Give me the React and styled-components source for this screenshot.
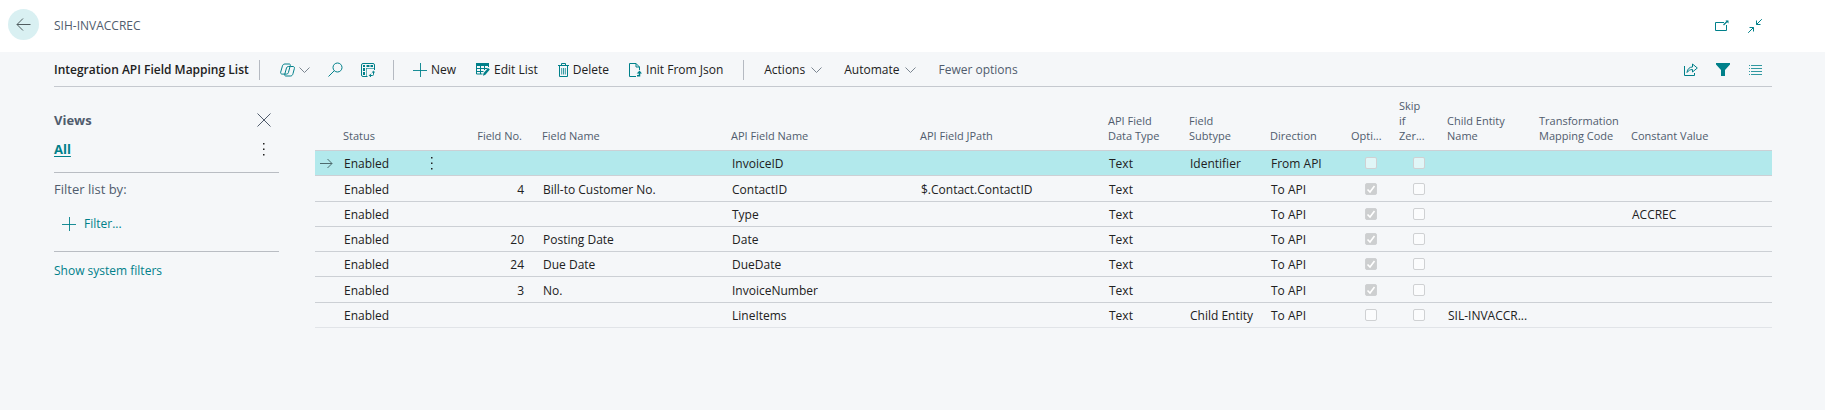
import React from "react";
import styled, { createGlobalStyle } from "styled-components";

const teal = "#00808a";
const slate = "#505c6d";
const rule = "#b9bdc3";

const GlobalStyle = createGlobalStyle`
  * { box-sizing: border-box; }
  body {
    margin: 0;
    background: #f5f7f9;
    color: #212121;
    font: 13px/20px "Open Sans", "Noto Sans", sans-serif;
  }
`;

const Header = styled.header`
  display: flex;
  align-items: center;
  justify-content: space-between;
  height: 52px;
  padding: 0 63px 0 8px;
  background: #fff;
`;

const Group = styled.div`
  display: flex;
  align-items: center;
  gap: ${(p) => p.$gap || 0}px;
`;

const IconButton = styled.button`
  display: inline-flex;
  align-items: center;
  justify-content: center;
  gap: 4px;
  min-width: 14px;
  padding: 0;
  border: 0;
  background: none;
  color: ${(p) => p.$color || teal};
`;

const BackButton = styled(IconButton)`
  width: 31px;
  height: 31px;
  margin-bottom: 4px;
  border-radius: 50%;
  background: #d9f0f2;
`;

const Crumb = styled.span`
  color: ${slate};
  font-size: 12px;
`;

const Main = styled.main`
  padding: 0 53px 0 54px;
`;

const Toolbar = styled.div`
  display: flex;
  align-items: center;
  justify-content: space-between;
  height: 35px;
  padding: 1px 10px 0 0;
  border-bottom: 1px solid #c5c9cf;
`;

const Title = styled.h1`
  margin: 0;
  width: 196px;
  font-size: 12px;
  font-weight: 600;
  white-space: nowrap;
`;

const Divider = styled.span`
  width: 1px;
  height: 20px;
  margin: 0 ${(p) => p.$right}px 0 ${(p) => p.$left}px;
  background: #b5bac2;
`;

const Action = styled.button`
  display: inline-flex;
  align-items: center;
  gap: ${(p) => p.$gap || 4}px;
  padding: 0;
  border: 0;
  background: none;
  color: ${(p) => (p.$muted ? slate : "#212121")};
  font: inherit;
  font-size: 12px;
  white-space: nowrap;
`;

const ActionIcon = styled.span`
  display: inline-flex;
  color: ${teal};
`;

const Body = styled.div`
  display: flex;
  gap: 36px;
`;

const Side = styled.aside`
  flex: 0 0 225px;
  padding-top: 22px;
`;

const SideRow = styled.div`
  display: flex;
  align-items: center;
  justify-content: space-between;
  height: 22px;
  padding-right: 8px;
  margin-bottom: ${(p) => p.$after || 0}px;
`;

const SideTitle = styled.h2`
  margin: 0;
  color: ${slate};
  font-size: 13px;
  font-weight: 700;
`;

const SideLink = styled.a`
  color: ${teal};
  font-size: ${(p) => (p.$active ? 13 : 12)}px;
  font-weight: ${(p) => (p.$active ? 700 : 400)};
  text-decoration: ${(p) => (p.$active ? "underline" : "none")};
  text-underline-offset: 2px;
`;

const Section = styled.section`
  padding-top: ${(p) => p.$top}px;
  border-top: 1px solid ${rule};
`;

const SectionLabel = styled.div`
  height: 20px;
  color: ${slate};
`;

const AddFilter = styled(Action)`
  height: 20px;
  margin: 15px 0 17px 8px;
  color: ${teal};
`;

const GridWrap = styled.div`
  flex: 1;
  min-width: 0;
`;

const Grid = styled.table`
  width: 100%;
  margin-top: 8px;
  border-collapse: separate;
  border-spacing: 0;
  table-layout: fixed;
`;

const HeadCell = styled.th`
  height: 56px;
  padding: 0 ${(p) => (p.$align === "right" ? 12 : 0)}px 7px 8px;
  border-bottom: 1px solid #ccd0d5;
  color: ${slate};
  font-size: 11px;
  font-weight: 400;
  line-height: 15px;
  text-align: ${(p) => p.$align || "left"};
  vertical-align: bottom;
  white-space: nowrap;
`;

const Cell = styled.td`
  padding: 2px ${(p) => (p.$align === "right" ? 10 : 0)}px 0 9px;
  overflow: hidden;
  border-bottom: 1px solid #ccd0d5;
  font-size: 12px;
  text-align: ${(p) => p.$align || "left"};
  text-overflow: ellipsis;
  white-space: nowrap;
`;

const Row = styled.tr`
  height: 25px;
  background: ${(p) => (p.$selected ? "#b2e9ec" : "transparent")};
  &:nth-child(4n + 2) { height: 26px; }
  &:last-child ${Cell} { border-bottom-color: #e1e4e8; }
`;

const IconCell = styled(Cell)`
  padding: 0 0 0 5px;
  line-height: 0;
`;

const CheckCell = styled(Cell)`
  padding: 0 0 0 8px;
  line-height: 0;
  text-align: center;
`;

const Check = styled.input`
  appearance: none;
  width: 12px;
  height: 12px;
  margin: 0;
  border: 1px solid #cfd1d3;
  border-radius: 2px;
  background: rgba(255, 255, 255, 0.6);
  &:checked {
    background: #cdcfd0 url("data:image/svg+xml,%3Csvg xmlns='http://www.w3.org/2000/svg' viewBox='0 0 10 10'%3E%3Cpath d='M1.5 5.5 4 8l4.5-6' fill='none' stroke='white' stroke-width='1.6'/%3E%3C/svg%3E");
  }
`;

const Svg = ({ w = 14, h = w, children, sw = 1 }) => (
  <svg width={w} height={h} viewBox={`0 0 ${w} ${h}`} fill="none" stroke="currentColor" strokeWidth={sw} aria-hidden="true">
    {children}
  </svg>
);

const Chevron = () => <Svg w={11} h={6}><path d="M.5.5l5 5 5-5" stroke="#7b8590" /></Svg>;
const Plus = () => <Svg><path d="M7.5 0v14M0 7.500h14" strokeWidth=".9" /></Svg>;
const Dots = () => <Svg w={2} h={13}><path d="M0 0h1.500v1.500H0zM0 5.500h1.500V7H0zM0 11h1.500v1.500H0z" fill="currentColor" stroke="none" /></Svg>;

const Copilot = () => (
  <Svg w={15} h={14}>
    <path d="M5 1h4.200c.9 0 1.300.6 1.100 1.500L8.400 9.600c-.3 1-.9 1.500-1.900 1.500H2.200C1 11.100.4 10.300.7 9.100l1.700-6C2.800 1.700 3.600 1 5 1z" />
    <path d="M10.300 3.500H13c1.100 0 1.700.8 1.400 1.900L13 10.600c-.4 1.600-1.200 2.400-2.600 2.400H5.900c-1 0-1.400-.6-1.200-1.500l1.800-6.600c.3-.9.9-1.400 1.900-1.400z" />
  </Svg>
);
const Search = () => <Svg w={15}><circle cx="9.500" cy="5.500" r="4.500" /><path d="M6.300 8.700.5 14.500" /></Svg>;
const Analyze = () => (
  <Svg>
    <path d="M6.500 13.500H2A1.500 1.500 0 0 1 .5 12V2A1.500 1.500 0 0 1 2 .5h10A1.500 1.500 0 0 1 13.500 2v5" />
    <path d="M2 3h2M5.500 3h3M9.500 3H12M3 5v3M3 9v3" strokeWidth="2" />
    <path d="M5 5.500h8.500M5.500 5v8" strokeWidth=".6" />
    <path d="M8.500 12.500h3a1 1 0 0 0 1-1v-3M10 10.800l-1.700 1.700 1.700 1.500M10.900 9.700l1.600-1.600 1.500 1.600" />
  </Svg>
);
const EditList = () => (
  <Svg w={14} h={13}>
    <path d="M0 1.500h13" strokeWidth="3" />
    <path d="M.5 1v10h6M.5 5.500h11M.5 8.500h7M4.500 2v9M8.500 2v5M12.500 1v3" />
    <path d="M7 12.700l.6-2.800L12.100 5l1.700 1.600-4.400 5.100z" fill="currentColor" stroke="none" />
  </Svg>
);
const Trash = () => (
  <Svg w={11} h={14}>
    <path d="M0 2.500h11M3.500 2.500v-2h4v2M1.500 2.500v11h8v-11" />
    <path d="M3.700 5v6.500M5.500 5v6.500M7.300 5v6.500" strokeWidth=".8" />
  </Svg>
);
const InitDoc = () => (
  <Svg w={13} h={14}>
    <path d="M7 13.500H.5V.5H7L10.500 4v3M7 .5V4h3.500" />
    <path d="M8 12.800h2.500V9" strokeWidth="1.500" />
    <path d="M7.700 10.500 10.500 7.500l2.500 3z" fill="currentColor" stroke="none" />
  </Svg>
);
const PopOut = () => <Svg w={14} h={12}><path d="M9 2.500H.5v8h11V5" /><path d="M8.500 5l4-4" strokeWidth="1.200" /><path d="M10.500.5h3v3z" fill="currentColor" stroke="none" /></Svg>;
const Collapse = () => <Svg><path d="M13.800.2 8.500 5.500M8.500 1.500v4h4M.2 13.800 5.500 8.500M1.500 8.500h4v4" /></Svg>;
const Share = () => (
  <Svg w={14} h={13}>
    <path d="M.5 3v9.500h10V10" />
    <path d="M3 9.500c.3-3.500 2.500-5.500 5.500-5.500V1L13.300 5l-4.800 4V6.500C6 6.500 4.500 7.500 3 9.500z" />
  </Svg>
);
const Funnel = () => <Svg w={14} h={13}><path d="M0 0h14v1.500L9 7v6H5V7L0 1.500z" fill="currentColor" stroke="none" /></Svg>;
const ListIcon = () => <Svg w={13} h={10}><path d="M0 .5h1M2 .5h11M0 3.500h1M2 3.500h11M0 6.500h1M2 6.500h11M0 9.500h1M2 9.500h11" strokeWidth=".8" /></Svg>;
const BackArrow = () => <Svg w={15} h={13}><path d="M14.500 6.500H1M7 .5l-6 6 6 6" stroke="#505c5f" /></Svg>;
const RowArrow = () => <Svg w={13} h={11}><path d="M0 5.500h12M7.500 1l4.500 4.500L7.500 10" stroke="#4d6b6e" /></Svg>;
const Close = () => <Svg><path d="M.5.5l13 13M13.500.5l-13 13" /></Svg>;

const columns = [
  { w: 20, label: "" },
  { w: 85, label: "Status" },
  { w: 26, label: "" },
  { w: 88, label: "Field No.", align: "right" },
  { w: 189, label: "Field Name" },
  { w: 189, label: "API Field Name" },
  { w: 188, label: "API Field JPath" },
  { w: 81, label: <>API Field<br />Data Type</> },
  { w: 81, label: <>Field<br />Subtype</> },
  { w: 81, label: "Direction" },
  { w: 48, label: "Opti..." },
  { w: 48, label: <>Skip<br />if<br />Zer...</> },
  { w: 92, label: <>Child Entity<br />Name</> },
  { w: 92, label: <>Transformation<br />Mapping Code</> },
  { label: "Constant Value" },
];

const rows = [
  { api: "InvoiceID", subtype: "Identifier", direction: "From API" },
  { no: 4, name: "Bill-to Customer No.", api: "ContactID", path: "$.Contact.ContactID", direction: "To API", optional: true },
  { api: "Type", direction: "To API", optional: true, constant: "ACCREC" },
  { no: 20, name: "Posting Date", api: "Date", direction: "To API", optional: true },
  { no: 24, name: "Due Date", api: "DueDate", direction: "To API", optional: true },
  { no: 3, name: "No.", api: "InvoiceNumber", direction: "To API", optional: true },
  { api: "LineItems", subtype: "Child Entity", direction: "To API", child: "SIL-INVACCR..." },
];

export default function App() {
  return (
    <>
      <GlobalStyle />
      <Header>
        <Group $gap={15}>
          <BackButton aria-label="Back"><BackArrow /></BackButton>
          <Crumb>SIH-INVACCREC</Crumb>
        </Group>
        <Group $gap={19}>
          <IconButton aria-label="Open in new window"><PopOut /></IconButton>
          <IconButton aria-label="Collapse"><Collapse /></IconButton>
        </Group>
      </Header>
      <Main>
        <Toolbar>
          <Group>
            <Title>Integration API Field Mapping List</Title>
            <Divider $left={9} $right={20} />
            <Group $gap={18}>
              <IconButton aria-label="Copilot"><Copilot /><Chevron /></IconButton>
              <IconButton aria-label="Search"><Search /></IconButton>
              <IconButton aria-label="Analyze"><Analyze /></IconButton>
            </Group>
            <Divider $left={18} $right={19} />
            <Group $gap={20}>
              <Action><ActionIcon><Plus /></ActionIcon>New</Action>
              <Action><ActionIcon><EditList /></ActionIcon>Edit List</Action>
              <Action><ActionIcon><Trash /></ActionIcon>Delete</Action>
              <Action><ActionIcon><InitDoc /></ActionIcon>Init From Json</Action>
            </Group>
            <Divider $left={20} $right={20} />
            <Group $gap={22}>
              <Action $gap={6}>Actions<Chevron /></Action>
              <Action $gap={6}>Automate<Chevron /></Action>
              <Action $muted>Fewer options</Action>
            </Group>
          </Group>
          <Group $gap={18}>
            <IconButton aria-label="Share"><Share /></IconButton>
            <IconButton aria-label="Filter"><Funnel /></IconButton>
            <IconButton aria-label="List view"><ListIcon /></IconButton>
          </Group>
        </Toolbar>
        <Body>
          <Side>
            <SideRow $after={7}>
              <SideTitle>Views</SideTitle>
              <IconButton aria-label="Close" $color={slate}><Close /></IconButton>
            </SideRow>
            <SideRow $after={12}>
              <SideLink href="#all" $active>All</SideLink>
              <IconButton aria-label="View options" $color="#212121"><Dots /></IconButton>
            </SideRow>
            <Section $top={6}>
              <SectionLabel>Filter list by:</SectionLabel>
              <AddFilter $gap={8}><Plus />Filter...</AddFilter>
            </Section>
            <Section $top={8}>
              <SideLink href="#system">Show system filters</SideLink>
            </Section>
          </Side>
          <GridWrap>
            <Grid>
              <colgroup>
                {columns.map((c, i) => <col key={i} width={c.w} />)}
              </colgroup>
              <thead>
                <tr>
                  {columns.map((c, i) => <HeadCell key={i} $align={c.align}>{c.label}</HeadCell>)}
                </tr>
              </thead>
              <tbody>
                {rows.map((r, i) => (
                  <Row key={r.api} $selected={i === 0}>
                    <IconCell>{i === 0 && <RowArrow />}</IconCell>
                    <Cell>Enabled</Cell>
                    <IconCell>{i === 0 && <IconButton aria-label="Row options" $color="#212121"><Dots /></IconButton>}</IconCell>
                    <Cell $align="right">{r.no}</Cell>
                    <Cell>{r.name}</Cell>
                    <Cell>{r.api}</Cell>
                    <Cell>{r.path}</Cell>
                    <Cell>Text</Cell>
                    <Cell>{r.subtype}</Cell>
                    <Cell>{r.direction}</Cell>
                    <CheckCell><Check type="checkbox" aria-label="Optional" checked={!!r.optional} disabled readOnly /></CheckCell>
                    <CheckCell><Check type="checkbox" aria-label="Skip if Zero" disabled /></CheckCell>
                    <Cell>{r.child}</Cell>
                    <Cell />
                    <Cell>{r.constant}</Cell>
                  </Row>
                ))}
              </tbody>
            </Grid>
          </GridWrap>
        </Body>
      </Main>
    </>
  );
}
